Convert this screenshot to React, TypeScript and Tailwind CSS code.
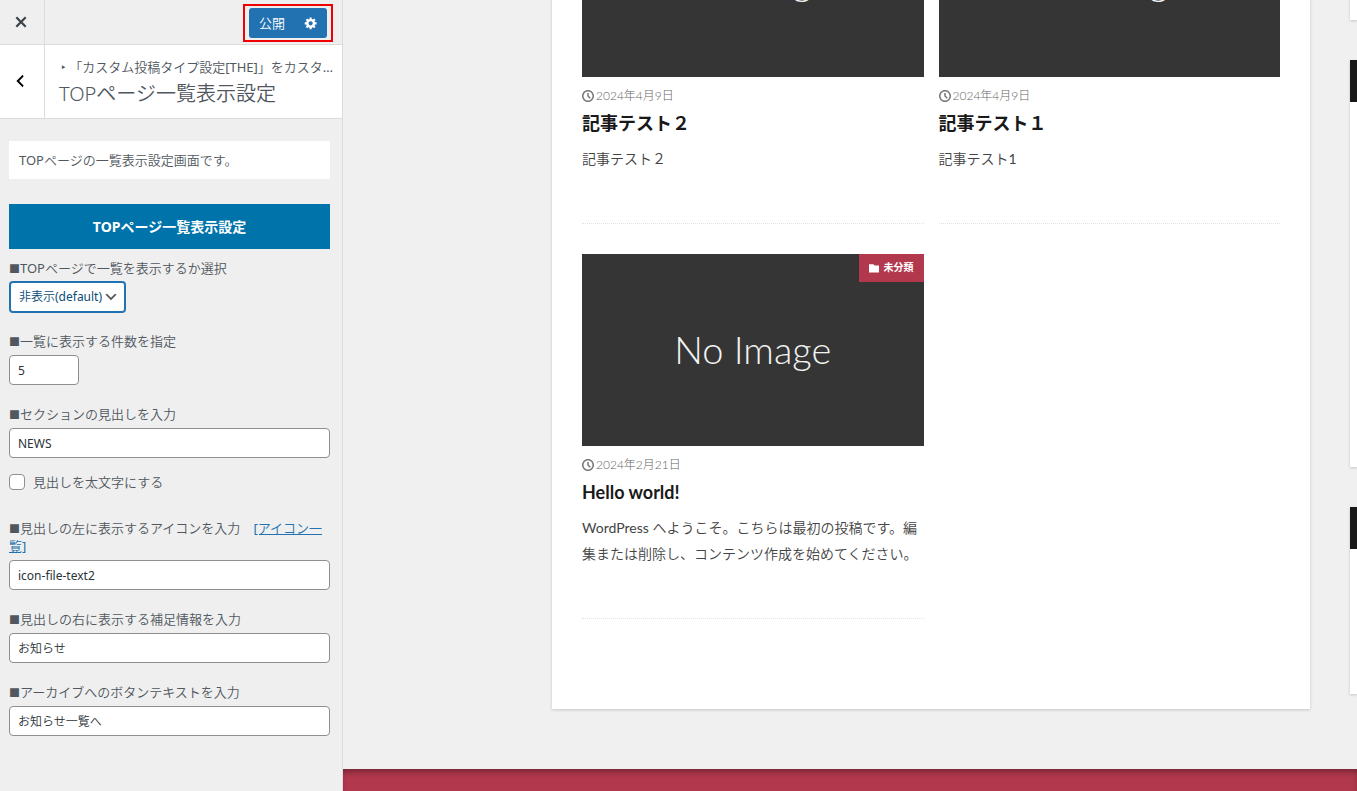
import { useState } from "react";
import type { ReactNode } from "react";

function CloseIcon() {
  return (
    <svg viewBox="0 0 20 20" className="size-[22px] fill-current" aria-hidden="true">
      <path d="M14.95 6.46L11.41 10l3.54 3.54-1.41 1.41L10 11.42l-3.53 3.53-1.42-1.42L8.58 10 5.05 6.47l1.42-1.42L10 8.58l3.54-3.53z" />
    </svg>
  );
}

function BackIcon() {
  return (
    <svg viewBox="0 0 20 20" className="size-[18px] fill-current" aria-hidden="true">
      <path d="M14 5l-5 5 5 5-1 2-7-7 7-7z" />
    </svg>
  );
}

function GearIcon() {
  return (
    <svg viewBox="0 0 20 20" className="size-3.5 fill-current" aria-hidden="true">
      <path d="M18 12h-2.18c-.17.7-.44 1.35-.81 1.93l1.54 1.54-2.1 2.1-1.54-1.54c-.58.36-1.23.63-1.91.79V19H8v-2.18c-.68-.16-1.33-.43-1.91-.79l-1.54 1.54-2.12-2.12 1.54-1.54c-.36-.58-.63-1.23-.79-1.91H1V9.03h2.17c.16-.7.44-1.35.8-1.94L2.43 5.55l2.1-2.1 1.54 1.54c.58-.37 1.24-.64 1.93-.81V2h3v2.18c.68.16 1.33.43 1.91.79l1.54-1.54 2.12 2.12-1.54 1.54c.36.59.64 1.24.8 1.94H18V12zm-8.5 1.5c1.66 0 3-1.34 3-3s-1.34-3-3-3-3 1.34-3 3 1.34 3 3 3z" />
    </svg>
  );
}

function ClockIcon() {
  return (
    <svg viewBox="0 0 32 32" className="size-3 fill-current" aria-hidden="true">
      <path d="M20.586 23.414l-6.586-6.586v-8.828h4v7.172l5.414 5.414zM16 0c-8.837 0-16 7.163-16 16s7.163 16 16 16 16-7.163 16-16-7.163-16-16-16zM16 28c-6.627 0-12-5.373-12-12s5.373-12 12-12c6.627 0 12 5.373 12 12s-5.373 12-12 12z" />
    </svg>
  );
}

function FolderIcon() {
  return (
    <svg viewBox="0 0 32 32" className="size-2.5 fill-current" aria-hidden="true">
      <path d="M14 4l4 4h14v22h-32v-26z" />
    </svg>
  );
}

function Field({ id, label, extra, children }: { id: string; label: string; extra?: ReactNode; children: ReactNode }) {
  return (
    <div className="flex flex-col items-start gap-[5px]">
      <div>
        <label htmlFor={id}>
          <span className="text-[11px] leading-none">■</span>
          {label}
        </label>
        {extra}
      </div>
      {children}
    </div>
  );
}

const inputClass =
  "h-[30px] rounded border border-[#8c8f94] bg-white px-2 text-xs text-[#2c3338] outline-none";

function Sidebar() {
  const [display, setDisplay] = useState("hide");
  return (
    <aside className="flex w-[343px] shrink-0 flex-col border-r border-[#dcdcde] bg-[#efefef] font-['Noto_Sans','Noto_Sans_CJK_JP_DemiLight','Noto_Sans_CJK_JP_Light','Noto_Sans_CJK_JP',sans-serif] text-[13px] leading-[18px] text-[#50575e]">
      <header className="flex h-[45px] border-b border-[#dcdcde]">
        <button type="button" aria-label="閉じる" className="flex w-[45px] items-center justify-center border-r border-[#dcdcde] pr-0.5 text-[#3c434a]">
          <CloseIcon />
        </button>
        <div className="ml-auto mr-[9px] mt-1 flex h-[38px] border-2 border-[#f00000] px-1 py-0.5">
          <button type="button" className="rounded-l-[3px] bg-[#2271b1] px-2.5 text-white">
            公開
          </button>
          <button type="button" aria-label="公開設定" className="flex w-8 items-center justify-center rounded-r-[3px] bg-[#2271b1] text-white">
            <GearIcon />
          </button>
        </div>
      </header>

      <div className="flex border-b border-[#dcdcde] bg-white">
        <button type="button" aria-label="戻る" className="flex w-[45px] shrink-0 items-center justify-center border-r border-[#dcdcde] pb-0.5 pr-1 text-black">
          <BackIcon />
        </button>
        <div className="min-w-0 flex-1 pb-[9px] pl-3.5 pr-2 pt-[13px]">
          <p className="truncate">
            <span className="ml-0.5">‣</span> 「カスタム投稿タイプ設定[THE]」をカスタマイズ中
          </p>
          <h3 className="mt-[3px] text-xl font-light leading-[30px]">TOPページ一覧表示設定</h3>
        </div>
      </div>

      <div className="flex flex-col px-[9px] pr-3 pt-[22px]">
        <p className="bg-white p-2.5">TOPページの一覧表示設定画面です。</p>
        <h4 className="mb-2.5 mt-[25px] bg-[#0073aa] py-3 text-center font-['Noto_Sans','Noto_Sans_CJK_JP',sans-serif] text-sm font-bold leading-[21px] text-white">
          TOPページ一覧表示設定
        </h4>

        <div className="flex flex-col gap-5">
          <Field id="display" label="TOPページで一覧を表示するか選択">
            <div className="relative mx-px">
              <select
                id="display"
                value={display}
                onChange={(e) => setDisplay(e.target.value)}
                className="block h-[30px] w-[115px] appearance-none rounded-[3px] border border-[#2271b1] bg-white pl-2 pr-5 text-xs text-[#0a4b78] outline-none ring-1 ring-[#2271b1]"
              >
                <option value="hide">非表示(default)</option>
                <option value="show">表示</option>
              </select>
              <svg viewBox="0 0 20 20" className="pointer-events-none absolute right-1.5 top-[7px] size-4 fill-[#555]" aria-hidden="true">
                <path d="M5 6l5 5 5-5 2 1-7 7-7-7 2-1z" />
              </svg>
            </div>
          </Field>
          <Field id="count" label="一覧に表示する件数を指定">
            <input id="count" defaultValue="5" className={inputClass + " w-[70px]"} />
          </Field>
          <Field id="heading" label="セクションの見出しを入力">
            <input id="heading" defaultValue="NEWS" className={inputClass + " w-full"} />
          </Field>
        </div>

        <div className="mb-7 mt-[15px] flex items-center gap-2">
          <input id="bold" type="checkbox" className="size-4 appearance-none rounded border border-[#8c8f94] bg-white checked:bg-[#2271b1]" />
          <label htmlFor="bold">見出しを太文字にする</label>
        </div>

        <div className="flex flex-col gap-5">
          <Field
            id="icon"
            label="見出しの左に表示するアイコンを入力"
            extra={
              <>
                {"　"}
                <a href="#icons" className="break-all text-[#2271b1] underline">
                  [アイコン一覧]
                </a>
              </>
            }
          >
            <input id="icon" defaultValue="icon-file-text2" className={inputClass + " w-full"} />
          </Field>
          <Field id="note" label="見出しの右に表示する補足情報を入力">
            <input id="note" defaultValue="お知らせ" className={inputClass + " w-full"} />
          </Field>
          <Field id="archive" label="アーカイブへのボタンテキストを入力">
            <input id="archive" defaultValue="お知らせ一覧へ" className={inputClass + " w-full"} />
          </Field>
        </div>
      </div>
    </aside>
  );
}

type Post = { date: string; title: string; excerpt: string };

const posts: Post[] = [
  { date: "2024年4月9日", title: "記事テスト２", excerpt: "記事テスト２" },
  { date: "2024年4月9日", title: "記事テスト１", excerpt: "記事テスト1" },
  {
    date: "2024年2月21日",
    title: "Hello world!",
    excerpt: "WordPress へようこそ。こちらは最初の投稿です。編集または削除し、コンテンツ作成を始めてください。",
  },
];

function PostCard({ post }: { post: Post }) {
  return (
    <article className="border-b border-dotted border-[#e2e2e2] pb-[51px]">
      <div className="relative flex aspect-video items-center justify-center bg-[#353535] text-[#f2f2f2]">
        <span className="pb-0.5 text-[38px] font-light leading-none">No Image</span>
        <a href="#category" className="absolute right-0 top-0 flex h-7 items-center gap-[5px] bg-[#b2384e] px-2.5 text-[10px] font-bold text-white">
          <FolderIcon />
          未分類
        </a>
      </div>
      <div className="mt-2.5 flex items-center gap-0.5 text-xs font-light leading-[18px] text-[#777]">
        <ClockIcon />
        <time className="text-[#666]">{post.date}</time>
      </div>
      <h2 className="mt-[5px] text-lg font-bold leading-[26px] text-[#191919]">{post.title}</h2>
      <p className="mt-2.5 font-['Lato','Noto_Sans_CJK_JP_DemiLight','Noto_Sans_CJK_JP_Light','Noto_Sans_CJK_JP',sans-serif] text-sm leading-[26px] text-[#444]">
        {post.excerpt}
      </p>
    </article>
  );
}

function Preview() {
  return (
    <main className="flex h-screen min-w-0 flex-1 flex-col justify-end overflow-hidden bg-[#f0f0f0] font-['Lato','Noto_Sans_CJK_JP',sans-serif]">
      <div className="mb-[60px] flex shrink-0 items-start gap-10 pl-[209px]">
        <section className="grid min-w-0 flex-1 grid-cols-2 gap-x-[15px] gap-y-[30px] bg-white px-[30px] pb-[90px] pt-[30px] shadow-[0_1px_3px_rgba(0,0,0,0.18)]">
          {posts.map((post) => (
            <PostCard key={post.title} post={post} />
          ))}
        </section>
        <aside className="flex w-[7px] shrink-0 flex-col gap-10">
          <div className="h-[165px] bg-white shadow-[0_1px_3px_rgba(0,0,0,0.18)]" />
          <div className="h-[407px] border-t-[42px] border-[#191919] bg-white shadow-[0_1px_3px_rgba(0,0,0,0.18)]" />
          <div className="h-[187px] border-t-[42px] border-[#191919] bg-white shadow-[0_1px_3px_rgba(0,0,0,0.18)]" />
        </aside>
      </div>
      <footer className="h-[22px] shrink-0 bg-[#b2384e] shadow-[inset_0_5px_6px_-2px_rgba(0,0,0,0.35)]" />
    </main>
  );
}

export default function App() {
  return (
    <div lang="ja" className="flex min-h-screen">
      <Sidebar />
      <Preview />
    </div>
  );
}
